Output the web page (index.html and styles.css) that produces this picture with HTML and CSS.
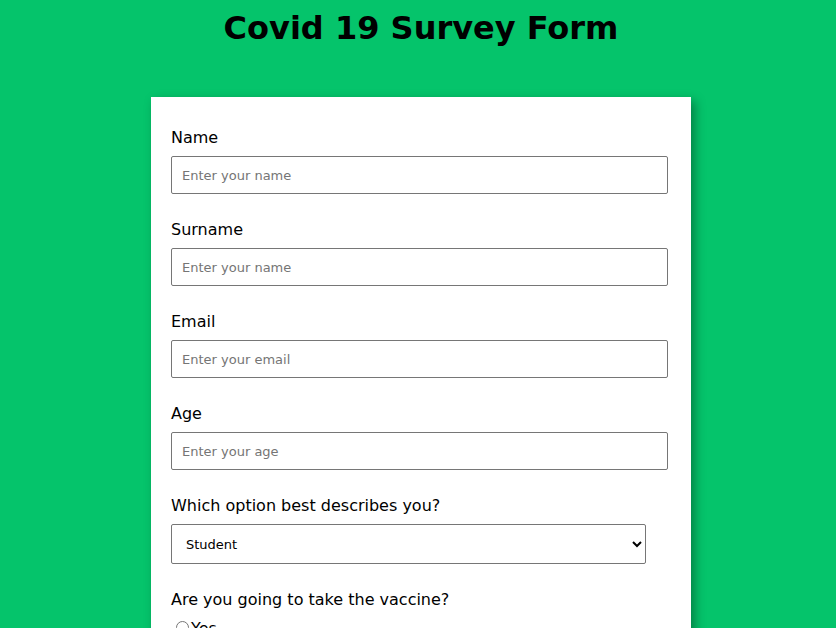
FILE: index.html
```html
<!DOCTYPE html>
<html>
<head>
<meta charset="utf-8">
<title>Covid 19 Survey Form</title>
<link rel="stylesheet" href="styles.css">
</head>
<body>
<h1 class="title">Covid 19 Survey Form</h1>
<form class="card">
  <div class="group">
    <label class="label" for="name">Name</label>
    <input class="field" id="name" type="text" placeholder="Enter your name">
  </div>
  <div class="group">
    <label class="label" for="surname">Surname</label>
    <input class="field" id="surname" type="text" placeholder="Enter your name">
  </div>
  <div class="group">
    <label class="label" for="email">Email</label>
    <input class="field" id="email" type="email" placeholder="Enter your email">
  </div>
  <div class="group">
    <label class="label" for="age">Age</label>
    <input class="field" id="age" type="text" placeholder="Enter your age">
  </div>
  <div class="group">
    <label class="label" for="role">Which option best describes you?</label>
    <select class="select" id="role">
      <option>Student</option>
      <option>Full Time Job</option>
      <option>Other</option>
    </select>
  </div>
  <div class="group">
    <p class="label">Are you going to take the vaccine?</p>
    <label class="radio"><input type="radio" name="vac">Yes</label>
    <label class="radio"><input type="radio" name="vac">No</label>
  </div>
</form>
</body>
</html>
```

FILE: styles.css
```css
html, body {
  margin: 0;
  padding: 0;
}
body {
  background: #05c46b;
  font-family: "DejaVu Sans", Verdana, sans-serif;
  color: #000;
  min-height: 700px;
}
.title {
  margin: 0;
  padding: 8px 0 0 6px;
  text-align: center;
  font-size: 32px;
  font-weight: bold;
  line-height: 40px;
}
.card {
  width: 500px;
  margin: 49px auto 0;
  padding: 29px 20px 20px;
  background: #fff;
  box-shadow: 4px 4px 10px rgba(0, 0, 0, 0.35);
  transform: translateX(3px);
}
.group {
  margin-bottom: 24px;
}
.label {
  display: block;
  margin: 0 0 9px;
  padding-top: 2px;
  font-size: 16px;
  line-height: 19px;
}
.field {
  display: block;
  box-sizing: border-box;
  width: 497px;
  height: 38px;
  margin: 0;
  padding: 0 10px;
  border: 1px solid #767676;
  border-radius: 2px;
  font-family: "DejaVu Sans", Verdana, sans-serif;
  font-size: 13px;
}
.field::placeholder {
  color: #757575;
}
.select {
  display: block;
  box-sizing: border-box;
  width: 475px;
  height: 40px;
  padding: 0 10px;
  border: 1px solid #767676;
  border-radius: 2px;
  background: #fff;
  font-family: "DejaVu Sans", Verdana, sans-serif;
  font-size: 13px;
  color: #000;
}
.radio {
  display: block;
  font-size: 16px;
  line-height: 19px;
}
.radio input {
  margin: 3px 2px 0 5px;
}
```
